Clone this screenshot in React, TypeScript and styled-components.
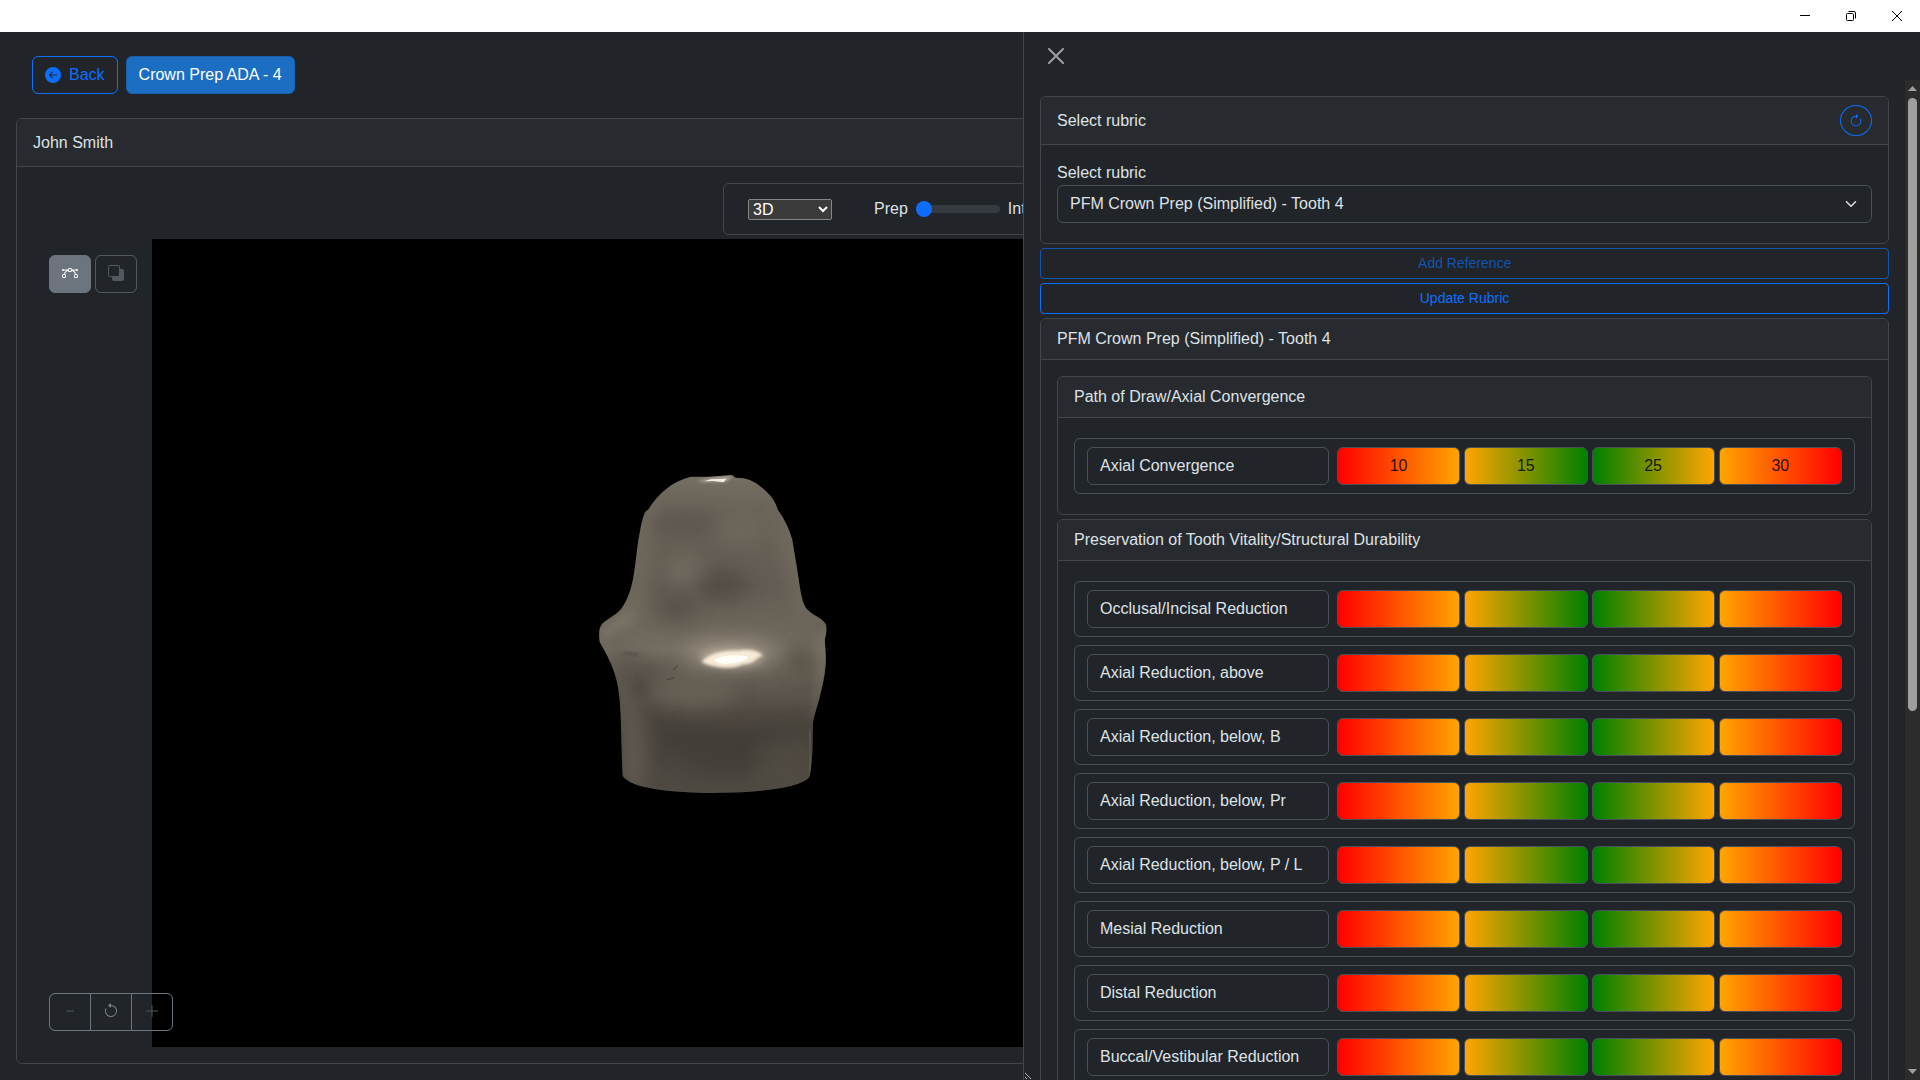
import React from "react";
import styled, { createGlobalStyle, css } from "styled-components";
import {
  BsArrowClockwise,
  BsArrowCounterclockwise,
  BsArrowLeftCircleFill,
  BsBezier,
  BsDash,
  BsPlusLg,
  BsSubtract,
} from "react-icons/bs";

const color = {
  body: "#212529",
  header: "#272b2f",
  text: "#dee2e6",
  line: "#424649",
  field: "#495057",
  primary: "#0d6efd",
  muted: "#6c757d",
};

const GlobalStyle = createGlobalStyle`
  *, *::before, *::after { box-sizing: border-box; }
  body {
    margin: 0;
    background: ${color.body};
    color: ${color.text};
    font-family: "Liberation Sans", Arial, sans-serif;
    font-size: 16px;
    line-height: 24px;
  }
  button, input, select { font: inherit; margin: 0; }
  svg { display: block; }
`;

const Page = styled.div`
  display: flex;
  flex-direction: column;
  height: 100vh;
  overflow: hidden;
`;

const TitleBar = styled.header`
  display: flex;
  justify-content: flex-end;
  flex: none;
  height: 32px;
  background: #fff;
`;

const WindowButton = styled.button`
  display: grid;
  place-items: center;
  width: 46px;
  border: 0;
  padding: 0;
  background: none;
  color: #000;
`;

const Workspace = styled.div`
  position: relative;
  display: flex;
  flex: 1;
  min-height: 0;
`;

const Main = styled.main`
  display: flex;
  flex-direction: column;
  flex: 1;
  min-width: 0;
  padding: 0 16px 16px;
`;

const Actions = styled.nav`
  display: flex;
  gap: 8px;
  padding: 24px 16px;
`;

const Button = styled.button<{ $variant?: "outline" | "solid" | "small" }>`
  display: flex;
  align-items: center;
  justify-content: center;
  gap: 8px;
  padding: 6px 12px;
  border: 1px solid ${color.primary};
  border-radius: 6px;
  background: transparent;
  color: ${color.primary};
  ${(p) =>
    p.$variant === "solid" &&
    css`
      background: #1b6ec2;
      border-color: #1861ac;
      color: #fff;
    `}
  ${(p) =>
    p.$variant === "small" &&
    css`
      padding: 4px 8px;
      border-radius: 4px;
      font-size: 14px;
      line-height: 21px;
    `}
  &:disabled {
    opacity: 0.65;
  }
`;

const RoundButton = styled(Button)`
  width: 32px;
  height: 31px;
  padding: 0;
  border-radius: 50%;
  font-size: 14px;
`;

const Card = styled.section<{ $grow?: boolean }>`
  display: flex;
  flex-direction: column;
  flex: ${(p) => (p.$grow ? "1" : "none")};
  min-height: 0;
  border: 1px solid ${color.line};
  border-radius: 6px;
`;

const CardHeader = styled.div<{ $tall?: boolean }>`
  display: flex;
  align-items: center;
  justify-content: space-between;
  min-height: ${(p) => (p.$tall ? "48px" : "41px")};
  padding: 0 16px;
  border-bottom: 1px solid ${color.line};
  border-radius: 5px 5px 0 0;
  background: ${color.header};
`;

const CardTitle = styled.h2`
  margin: 0;
  font-size: 16px;
  font-weight: 400;
`;

const CardBody = styled.div<{ $gap?: number }>`
  display: flex;
  flex-direction: column;
  flex: 1;
  gap: ${(p) => p.$gap ?? 0}px;
  min-height: 0;
  padding: 16px;
`;

const Toolbar = styled.div`
  display: flex;
  align-items: center;
  align-self: center;
  gap: 42px;
  width: 474px;
  height: 52px;
  padding: 0 24px;
  border: 1px solid ${color.line};
  border-radius: 6px;
`;

const ModeSelect = styled.select`
  width: 84px;
  height: 21px;
  color-scheme: dark;
  line-height: normal;
`;

const BlendControl = styled.div`
  display: flex;
  align-items: center;
  gap: 8px;
`;

const Slider = styled.input`
  width: 84px;
  height: 16px;
  appearance: none;
  background: transparent;
  &::-webkit-slider-runnable-track {
    height: 8px;
    border-radius: 8px;
    background: #343a40;
  }
  &::-webkit-slider-thumb {
    appearance: none;
    width: 16px;
    height: 16px;
    margin-top: -4px;
    border-radius: 50%;
    background: ${color.primary};
  }
`;

const Viewer = styled.div`
  position: relative;
  display: flex;
  flex: 1;
  min-height: 0;
`;

const ToolColumn = styled.div`
  display: flex;
  align-items: flex-start;
  gap: 4px;
  width: 119px;
  padding: 16px;
`;

const IconButton = styled.button<{ $active?: boolean }>`
  display: grid;
  place-items: center;
  flex: none;
  width: 42px;
  height: 38px;
  padding: 0 0 2px;
  border: 1px solid ${color.muted};
  border-radius: 6px;
  background: ${(p) => (p.$active ? color.muted : "transparent")};
  color: ${(p) => (p.$active ? "#fff" : color.muted)};
  &:disabled {
    opacity: 0.65;
  }
`;

const ZoomGroup = styled.div`
  position: absolute;
  left: 16px;
  bottom: 16px;
  display: flex;
`;

const ZoomButton = styled.button<{ $dim?: boolean }>`
  display: grid;
  place-items: center;
  width: 42px;
  height: 38px;
  padding: 0 0 2px;
  border: 1px solid ${color.muted};
  background: transparent;
  color: ${(p) => (p.$dim ? "#50565c" : "#7b8187")};
  & + & {
    margin-left: -1px;
  }
  &:first-child {
    border-radius: 6px 0 0 6px;
  }
  &:last-child {
    border-radius: 0 6px 6px 0;
  }
`;

const Stage = styled.div`
  display: grid;
  place-items: center;
  flex: 1;
  max-width: 1116px;
  background: #000;
`;

const Drawer = styled.aside`
  position: absolute;
  inset: 0 0 0 auto;
  display: flex;
  flex-direction: column;
  width: 897px;
  max-width: 100%;
  border-left: 1px solid ${color.line};
  background: ${color.body};
`;

const DrawerHeader = styled.div`
  display: flex;
  align-items: center;
  flex: none;
  height: 48px;
  padding: 0 24px;
`;

const CloseButton = styled.button`
  padding: 0;
  border: 0;
  background: none;
  color: #9c9ea0;
`;

const DrawerScroll = styled.div`
  display: flex;
  flex: 1;
  min-height: 0;
`;

const DrawerBody = styled.div`
  display: flex;
  flex-direction: column;
  flex: 1;
  gap: 4px;
  min-width: 0;
  padding: 16px;
  overflow: hidden;
`;

const Scrollbar = styled.div`
  display: flex;
  flex-direction: column;
  align-items: center;
  flex: none;
  width: 15px;
  padding: 6px 0;
  background: #2c2c2c;
`;

const Thumb = styled.div`
  width: 9px;
  height: 62%;
  margin: 7px 0 auto;
  border-radius: 5px;
  background: #9f9f9f;
`;

const Grip = styled.svg`
  position: absolute;
  left: 1px;
  bottom: 1px;
`;

const SelectWrap = styled.div`
  position: relative;
  margin-bottom: 4px;
  svg {
    position: absolute;
    right: 13px;
    top: 13px;
    pointer-events: none;
  }
`;

const fieldStyle = css`
  width: 100%;
  min-width: 0;
  height: 38px;
  padding: 0 12px;
  border: 1px solid ${color.field};
  border-radius: 6px;
  background: ${color.body};
  color: ${color.text};
`;

const FormSelect = styled.select`
  ${fieldStyle}
  appearance: none;
  display: block;
`;

const NameInput = styled.input`
  ${fieldStyle}
`;

const ValueInput = styled.input<{ $from: string; $to: string }>`
  ${fieldStyle}
  background: linear-gradient(to right, ${(p) => p.$from}, ${(p) => p.$to});
  color: rgba(0, 0, 0, 0.85);
  text-align: center;
`;

const Row = styled.div`
  display: grid;
  grid-template-columns: 242fr 505fr;
  gap: 8px;
  padding: 8px 12px;
  border: 1px solid ${color.field};
  border-radius: 6px;
`;

const Rows = styled.div`
  display: flex;
  flex-direction: column;
  gap: 8px;
  padding: 4px 0;
`;

const Values = styled.div`
  display: grid;
  grid-template-columns: repeat(4, 1fr);
  gap: 4px;
`;

const bands = [
  ["red", "orange"],
  ["orange", "green"],
  ["green", "orange"],
  ["orange", "red"],
];

const groups = [
  {
    title: "Path of Draw/Axial Convergence",
    rows: [{ name: "Axial Convergence", values: ["10", "15", "25", "30"] }],
  },
  {
    title: "Preservation of Tooth Vitality/Structural Durability",
    rows: [
      "Occlusal/Incisal Reduction",
      "Axial Reduction, above",
      "Axial Reduction, below, B",
      "Axial Reduction, below, Pr",
      "Axial Reduction, below, P / L",
      "Mesial Reduction",
      "Distal Reduction",
      "Buccal/Vestibular Reduction",
    ].map((name) => ({ name, values: ["", "", "", ""] })),
  },
];

function Criterion({ name, values }: { name: string; values: string[] }) {
  return (
    <Row>
      <NameInput aria-label="Criterion" readOnly value={name} />
      <Values>
        {bands.map(([from, to], i) => (
          <ValueInput
            key={i}
            aria-label={`${name} limit ${i + 1}`}
            $from={from}
            $to={to}
            defaultValue={values[i]}
          />
        ))}
      </Values>
    </Row>
  );
}

const outline =
  "M392 110 L450 110 L516 105 L526 113 C555 112 582 121 604 142 C632 164 646 184 654 211 C672 234 688 268 697 300 C705 350 714 400 720 445 C725 475 730 492 738 504 C756 526 784 532 797 551 C801 562 800 578 795 596 C794 620 799 640 797 668 C795 710 786 742 777 780 C768 812 762 828 759 850 C757 900 761 950 749 1008 C744 1024 700 1040 640 1048 C560 1058 480 1060 410 1058 C310 1054 215 1044 188 1008 C185 950 184 890 182 825 C180 780 176 740 167 712 C158 676 140 642 119 606 C116 585 116 562 128 550 C148 532 170 524 184 506 C206 476 216 440 222 400 C230 350 232 310 239 280 C243 255 248 235 255 216 L266 208 C290 165 335 124 392 110 Z";

function Tooth() {
  return (
    <svg width="300" height="406" viewBox="0 0 900 1218" role="img" aria-label="Crown preparation model">
      <defs>
        <linearGradient id="base" x1="0" y1="105" x2="0" y2="1058" gradientUnits="userSpaceOnUse">
          <stop offset="0" stopColor="#756e63" />
          <stop offset="0.12" stopColor="#6a6359" />
          <stop offset="0.35" stopColor="#635c53" />
          <stop offset="0.48" stopColor="#6d665b" />
          <stop offset="0.55" stopColor="#777064" />
          <stop offset="0.64" stopColor="#645d53" />
          <stop offset="0.75" stopColor="#504a42" />
          <stop offset="0.82" stopColor="#48433c" />
          <stop offset="1" stopColor="#4f4a42" />
        </linearGradient>
        <clipPath id="shape"><path d={outline} /></clipPath>
        <filter id="b6" x="-50%" y="-50%" width="200%" height="200%"><feGaussianBlur stdDeviation="5" /></filter>
        <filter id="b12" x="-50%" y="-50%" width="200%" height="200%"><feGaussianBlur stdDeviation="12" /></filter>
        <filter id="b30" x="-80%" y="-80%" width="260%" height="260%"><feGaussianBlur stdDeviation="28" /></filter>
      </defs>
      <path d={outline} fill="url(#base)" />
      <g clipPath="url(#shape)">
        <path d="M230 220 C215 330 220 460 160 550 L240 560 C265 450 260 320 290 170Z" fill="#7d7568" opacity="0.6" filter="url(#b30)" />
        <path d="M620 150 C675 280 680 420 720 520 L760 540 L730 300Z" fill="#7d7568" opacity="0.6" filter="url(#b30)" />
        <ellipse cx="370" cy="250" rx="110" ry="40" fill="#554e47" opacity="0.5" filter="url(#b30)" />
        <ellipse cx="540" cy="270" rx="80" ry="35" fill="#777064" opacity="0.5" filter="url(#b30)" />
        <ellipse cx="375" cy="395" rx="60" ry="45" fill="#7a7368" opacity="0.6" filter="url(#b30)" />
        <ellipse cx="490" cy="435" rx="75" ry="48" fill="#4d463f" opacity="0.7" filter="url(#b30)" />
        <ellipse cx="350" cy="505" rx="60" ry="36" fill="#4d463f" opacity="0.65" filter="url(#b30)" />
        <path d="M140 600 C190 640 260 650 320 670 L310 800 L230 790 L160 700Z" fill="#524c44" opacity="0.6" filter="url(#b30)" />
        <path d="M175 740 C205 760 240 820 265 880 L250 1050 L180 1040Z" fill="#6e675b" opacity="0.6" filter="url(#b30)" />
        <ellipse cx="400" cy="755" rx="130" ry="50" fill="#6a6359" opacity="0.8" filter="url(#b30)" />
        <path d="M290 830 C400 890 600 880 740 850 L730 900 L600 1000 L420 1000 L310 900Z" fill="#403b34" opacity="0.55" filter="url(#b30)" />
        <path d="M600 900 L740 870 L750 1040 L570 1050Z" fill="#575147" opacity="0.5" filter="url(#b30)" />
        <ellipse cx="725" cy="655" rx="38" ry="46" fill="#463f38" opacity="0.6" filter="url(#b30)" />
        <path d="M798 560 L800 690 L765 830 L752 850 C770 760 776 670 778 590Z" fill="#7b7367" opacity="0.6" filter="url(#b12)" />
        <path d="M118 565 C150 535 180 535 205 505 L220 545 C195 570 150 580 130 600Z" fill="#837b6e" opacity="0.55" filter="url(#b12)" />
        <path d="M748 870 L750 1010" stroke="#6d665b" strokeWidth="10" opacity="0.6" filter="url(#b6)" />
        <path d="M192 640 C202 630 212 648 236 644" fill="none" stroke="#403b34" strokeWidth="7" opacity="0.5" filter="url(#b6)" />
        <ellipse cx="240" cy="745" rx="18" ry="26" fill="#49433b" opacity="0.45" filter="url(#b12)" />
        <ellipse cx="510" cy="640" rx="135" ry="40" fill="#a3998a" opacity="0.75" filter="url(#b30)" />
        <ellipse cx="515" cy="652" rx="95" ry="28" fill="#c9beae" opacity="0.6" filter="url(#b12)" />
        <path d="M425 664 C450 640 490 630 535 632 C570 624 600 636 609 647 C585 652 588 671 548 673 C530 686 490 684 470 680 C455 678 435 674 425 664Z" fill="#fff2de" opacity="0.9" filter="url(#b6)" />
        <path d="M462 660 C485 644 530 642 565 650 C560 664 525 670 490 672 C476 670 466 666 462 660Z" fill="#fffdf8" />
        <path d="M322 718 L343 714 M340 690 L352 677" stroke="#38332d" strokeWidth="5" opacity="0.45" />
        <path d="M429 638 L435 641 M500 601 L528 604 M560 600 L570 599" stroke="#a69c8d" strokeWidth="2" opacity="0.5" />
        <path d="M410 126 C440 110 490 108 520 108 L498 126Z" fill="#b3aa9c" opacity="0.8" filter="url(#b6)" />
        <path d="M432 124 L452 118 L500 116 L490 127 L460 123Z" fill="#fff6e8" opacity="0.9" />
      </g>
    </svg>
  );
}

export default function App() {
  return (
    <Page>
      <GlobalStyle />
      <TitleBar>
        <WindowButton aria-label="Minimize">
          <svg width="10" height="10" fill="none" stroke="currentColor"><path d="M0 4.5h10" /></svg>
        </WindowButton>
        <WindowButton aria-label="Restore">
          <svg width="10" height="10" fill="none" stroke="currentColor">
            <rect x="0.5" y="2.5" width="7" height="7" rx="1" />
            <path d="M2.5 0.5H8A1.5 1.5 0 0 1 9.5 2V7.5" />
          </svg>
        </WindowButton>
        <WindowButton aria-label="Close window">
          <svg width="10" height="10" fill="none" stroke="currentColor"><path d="M0 0l10 10M10 0L0 10" /></svg>
        </WindowButton>
      </TitleBar>
      <Workspace>
        <Main>
          <Actions>
            <Button><BsArrowLeftCircleFill />Back</Button>
            <Button $variant="solid">Crown Prep ADA - 4</Button>
          </Actions>
          <Card $grow>
            <CardHeader $tall><CardTitle>John Smith</CardTitle></CardHeader>
            <CardBody $gap={4}>
              <Toolbar>
                <ModeSelect aria-label="View mode" defaultValue="3D"><option>3D</option></ModeSelect>
                <BlendControl>
                  <label htmlFor="blend">Prep</label>
                  <Slider id="blend" type="range" min="0" max="100" defaultValue="0" />
                  <span>Int</span>
                </BlendControl>
              </Toolbar>
              <Viewer>
                <ToolColumn>
                  <IconButton $active aria-label="Curve"><BsBezier /></IconButton>
                  <IconButton disabled aria-label="Overlay"><BsSubtract /></IconButton>
                </ToolColumn>
                <Stage><Tooth /></Stage>
                <ZoomGroup>
                  <ZoomButton $dim aria-label="Zoom out"><BsDash /></ZoomButton>
                  <ZoomButton aria-label="Reset view"><BsArrowCounterclockwise /></ZoomButton>
                  <ZoomButton $dim aria-label="Zoom in"><BsPlusLg /></ZoomButton>
                </ZoomGroup>
              </Viewer>
            </CardBody>
          </Card>
        </Main>
        <Drawer>
          <DrawerHeader>
            <CloseButton aria-label="Close">
              <svg width="16" height="16" fill="none" stroke="currentColor" strokeWidth="2" strokeLinecap="round">
                <path d="M1 1l14 14M15 1L1 15" />
              </svg>
            </CloseButton>
          </DrawerHeader>
          <DrawerScroll>
            <DrawerBody>
              <Card>
                <CardHeader $tall>
                  <CardTitle>Select rubric</CardTitle>
                  <RoundButton aria-label="Reload rubrics"><BsArrowClockwise /></RoundButton>
                </CardHeader>
                <CardBody>
                  <label htmlFor="rubric">Select rubric</label>
                  <SelectWrap>
                    <FormSelect id="rubric"><option>PFM Crown Prep (Simplified) - Tooth 4</option></FormSelect>
                    <svg width="16" height="12" viewBox="0 0 16 16" fill="none" stroke={color.text} strokeWidth="2" strokeLinecap="round" strokeLinejoin="round">
                      <path d="m2 5 6 6 6-6" />
                    </svg>
                  </SelectWrap>
                </CardBody>
              </Card>
              <Button $variant="small" disabled>Add Reference</Button>
              <Button $variant="small">Update Rubric</Button>
              <Card>
                <CardHeader><CardTitle>PFM Crown Prep (Simplified) - Tooth 4</CardTitle></CardHeader>
                <CardBody $gap={4}>
                  {groups.map((group) => (
                    <Card key={group.title}>
                      <CardHeader><CardTitle>{group.title}</CardTitle></CardHeader>
                      <CardBody>
                        <Rows>
                          {group.rows.map((row) => <Criterion key={row.name} {...row} />)}
                        </Rows>
                      </CardBody>
                    </Card>
                  ))}
                </CardBody>
              </Card>
            </DrawerBody>
            <Scrollbar aria-hidden="true">
              <svg width="9" height="5" fill="#9f9f9f"><path d="M4.500 0L9 5H0Z" /></svg>
              <Thumb />
              <svg width="9" height="5" fill="#9f9f9f"><path d="M0 0H9L4.500 5Z" /></svg>
            </Scrollbar>
          </DrawerScroll>
          <Grip width="7" height="7" stroke="#b8babc" fill="none"><path d="M0 1l6 6M0 5l2 2" /></Grip>
        </Drawer>
      </Workspace>
    </Page>
  );
}
